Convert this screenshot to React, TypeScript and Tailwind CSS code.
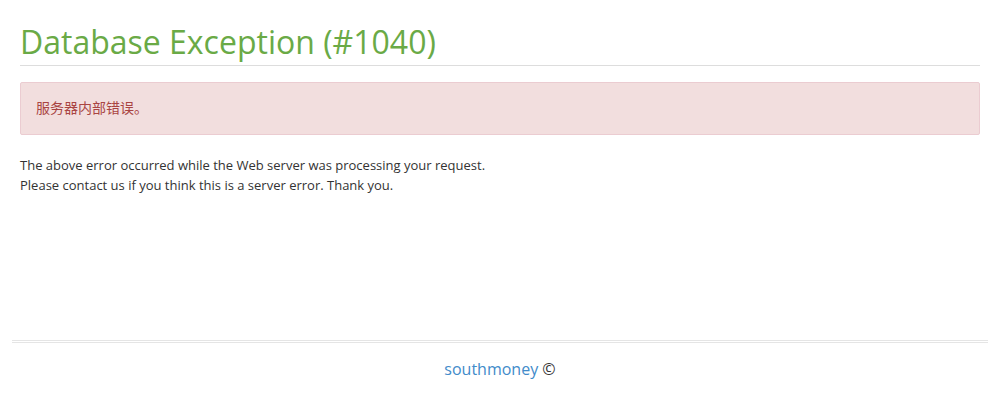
export default function App() {
  return (
    <div className="min-h-[400px] bg-white font-['Open_Sans',sans-serif] text-[#333]">
      <div className="px-5 pt-5">
        <h1 className="border-b border-[#ddd] pb-px text-[32px] leading-[44px] text-[#6aaa46]">
          Database Exception (#1040)
        </h1>
        <div className="mt-4 rounded-[2px] border border-[#ebccd1] bg-[#f2dede] px-[15px] pt-[15px] pb-4 text-[14px] leading-5 text-[#a94442] font-['Open_Sans','Noto_Sans_CJK_SC',sans-serif]">
          服务器内部错误。
        </div>
        <div className="mt-5 text-[13px] leading-5">
          <p>The above error occurred while the Web server was processing your request.</p>
          <p>Please contact us if you think this is a server error. Thank you.</p>
        </div>
      </div>
      <div className="mx-3 mt-[145px] border-y border-[#e5e5e5] pt-px" />
      <div className="pt-[14px] text-center text-[16px] leading-[24px]">
        <span className="text-[#428bca]">southmoney</span> ©
      </div>
    </div>
  )
}
